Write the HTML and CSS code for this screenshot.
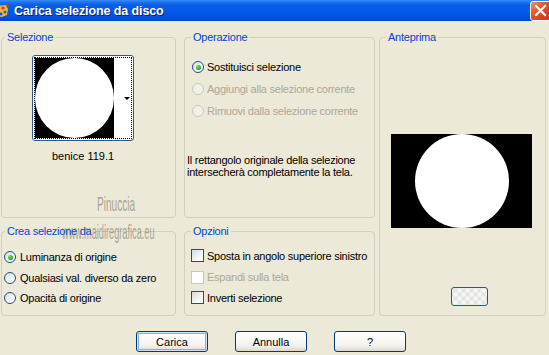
FILE: index.html
```html
<!DOCTYPE html>
<html lang="it">
<head>
    <meta charset="UTF-8">
    <title>Carica selezione da disco</title>
    <link rel="stylesheet" href="styles.css">
</head>
<body>
    <div class="window">
        <div class="titlebar">
            <svg class="app-icon" width="9" height="16" viewBox="0 0 9 16">
                <path d="M-4 3 L6 2 L8 6 L7 12 L2 14 L-4 13 Z" fill="#E8B25A"/>
                <circle cx="3" cy="5" r="1.6" fill="#D43A22"/>
                <circle cx="5" cy="9" r="1.5" fill="#2F7A2F"/>
                <circle cx="1" cy="11" r="1.4" fill="#2846C8"/>
                <path d="M6 1 L8 0 L9 4 L7 5 Z" fill="#8A5A2A"/>
            </svg>
            <span class="title">Carica selezione da disco</span>
            <span class="close">
                <svg width="13" height="13" viewBox="0 0 13 13">
                    <path d="M2 2 L11 11 M11 2 L2 11" stroke="#fff" stroke-width="2.2" stroke-linecap="square"/>
                </svg>
            </span>
        </div>

        <div class="panels">
            <fieldset class="group left sel">
                <legend>Selezione</legend>
                <div class="picker">
                    <div class="thumb">
                        <div class="focus">
                            <div class="shape"><div class="disc"></div></div>
                            <div class="strip"><span class="arrow"></span></div>
                        </div>
                    </div>
                    <div class="thumb-name">benice 119.1</div>
                </div>
            </fieldset>

            <fieldset class="group mid op">
                <legend>Operazione</legend>
                <div class="list">
                    <div class="row"><span class="radio on"></span><span>Sostituisci selezione</span></div>
                    <div class="row disabled"><span class="radio"></span><span>Aggiungi alla selezione corrente</span></div>
                    <div class="row disabled"><span class="radio"></span><span>Rimuovi dalla selezione corrente</span></div>
                </div>
                <p class="note">Il rettangolo originale della selezione<br>intersecherà completamente la tela.</p>
            </fieldset>

            <fieldset class="group right prev">
                <legend>Anteprima</legend>
                <div class="preview"><div class="disc"></div></div>
                <div class="pattern-btn"></div>
            </fieldset>

            <fieldset class="group left crea">
                <legend>Crea selezione da</legend>
                <div class="list">
                    <div class="row short"><span class="radio on"></span><span>Luminanza di origine</span></div>
                    <div class="row short"><span class="radio"></span><span>Qualsiasi val. diverso da zero</span></div>
                    <div class="row short"><span class="radio"></span><span>Opacità di origine</span></div>
                </div>
            </fieldset>

            <fieldset class="group mid opt">
                <legend>Opzioni</legend>
                <div class="list">
                    <div class="row opt-first"><span class="check"></span><span>Sposta in angolo superiore sinistro</span></div>
                    <div class="row short disabled"><span class="check"></span><span>Espandi sulla tela</span></div>
                    <div class="row short"><span class="check"></span><span>Inverti selezione</span></div>
                </div>
            </fieldset>
        </div>

        <div class="buttons">
            <button class="btn default">Carica</button>
            <button class="btn">Annulla</button>
            <button class="btn">?</button>
        </div>

        <div class="watermark">
            <span class="wm-name">Pinuccia</span>
            <span class="wm-site">www.maidiregrafica.eu</span>
        </div>
    </div>
</body>
</html>
```

FILE: styles.css
```css
body {
    margin: 0;
    background: #ECE9D8;
    font-family: "Liberation Sans", Arial, sans-serif;
    font-size: 11px;
    letter-spacing: -0.25px;
    color: #000000;
}
.window {
    position: relative;
    width: 549px;
    height: 355px;
    overflow: hidden;
}
.titlebar {
    display: flex;
    align-items: center;
    height: 21px;
    background: linear-gradient(#3A8CF8 0, #1F74F2 2px, #0A5DE6 5px, #0458E8 12px, #0152E0 17px, #003FCB 21px);
}
.app-icon {
    flex: none;
}
.title {
    margin-left: 5px;
    color: #FFFFFF;
    font-weight: bold;
    font-size: 12.5px;
    letter-spacing: -0.1px;
    text-shadow: 1px 1px 0 #0A1E80;
}
.close {
    margin-left: auto;
    margin-right: -2px;
    width: 21px;
    height: 20px;
    box-sizing: border-box;
    border: 1px solid #FFFFFF;
    border-radius: 3px;
    background: linear-gradient(135deg, #F08A6E, #E0502C 45%, #C8361A);
    display: flex;
    align-items: center;
    justify-content: center;
}

/* group boxes */
.panels {
    display: grid;
    grid-template-columns: 175px 199px 171px;
    grid-template-rows: 187px 91px;
    row-gap: 7px;
    margin: 10px 0 0 1px;
}
.group {
    margin: 0;
    padding: 0;
    min-width: 0;
    border: 1px solid #D0D0BF;
    border-radius: 4px;
}
.group legend {
    padding: 0 2px;
    margin-left: 6px;
    color: #0046D5;
    line-height: 13px;
}
.group.left legend {
    margin-left: 3px;
}
.group.mid {
    margin-left: 8px;
}
.group.right {
    margin-left: 4px;
    grid-row: 1 / 3;
    grid-column: 3;
}

/* selezione */
.picker {
    display: flex;
    flex-direction: column;
    align-items: center;
    width: 102px;
    margin: 11px 0 0 30px;
}
.thumb {
    width: 102px;
    height: 86px;
    box-sizing: border-box;
    border: 1px solid #30598A;
    border-radius: 3px;
    padding: 1px;
    background: #FFFFFF;
}
.focus {
    display: flex;
    height: 100%;
    box-sizing: border-box;
    border: 1px dotted #000000;
}
.shape {
    width: 79px;
    background: #000000;
}
.shape .disc {
    width: 100%;
    height: 100%;
    border-radius: 50%;
    background: #FFFFFF;
}
.strip {
    flex: 1;
    display: flex;
    align-items: center;
    justify-content: flex-end;
    padding-right: 1px;
}
.arrow {
    width: 0;
    height: 0;
    border-left: 3px solid transparent;
    border-right: 3px solid transparent;
    border-top: 3px solid #000000;
}
.thumb-name {
    margin-top: 9px;
    line-height: 13px;
    letter-spacing: 0;
}

/* lists of radios and checks */
.list {
    display: flex;
    flex-direction: column;
}
.op .list {
    margin: 12px 0 0 7px;
}
.crea .list {
    margin: 9px 0 0 2px;
}
.opt .list {
    margin: 6px 0 0 6px;
}
.row {
    display: flex;
    align-items: center;
    gap: 3px;
    height: 22px;
}
.row.short {
    height: 20.5px;
}
.row.opt-first {
    height: 23px;
}
.crea .row {
    gap: 4px;
}
.row.disabled {
    color: #ACA899;
}
.radio {
    flex: none;
    width: 12px;
    height: 12px;
    box-sizing: border-box;
    border: 1px solid #1C5180;
    border-radius: 50%;
    background: linear-gradient(135deg, #DCDCD4, #FFFFFF 80%);
    display: flex;
    align-items: center;
    justify-content: center;
}
.radio.on::after {
    content: "";
    width: 5px;
    height: 5px;
    border-radius: 50%;
    background: radial-gradient(circle at 35% 35%, #7BE07B, #21A121 70%);
}
.disabled .radio {
    border-color: #CAC8BB;
    background: #F2F1E8;
}
.check {
    flex: none;
    width: 13px;
    height: 13px;
    box-sizing: border-box;
    border: 1px solid #1C5180;
    background: linear-gradient(135deg, #DCDCD4, #FFFFFF 85%);
}
.disabled .check {
    border-color: #CAC8BB;
    background: #FFFFFF;
}
.note {
    margin: 33px 0 0 2px;
    line-height: 11.5px;
}

/* anteprima */
.preview {
    width: 141px;
    height: 94px;
    margin: 90px 0 0 11px;
    background: #000000;
    display: flex;
    justify-content: center;
}
.preview .disc {
    width: 94px;
    height: 94px;
    border-radius: 50%;
    background: #FFFFFF;
}
.pattern-btn {
    width: 37px;
    height: 19px;
    box-sizing: border-box;
    margin: 59px 0 0 71px;
    border: 1px solid #2F5785;
    border-radius: 3px;
    background:
        repeating-conic-gradient(#F6F6F3 0 25%, #E4E4E0 0 50%) 50% 50% / 8px 8px;
}

/* bottom buttons */
.buttons {
    display: flex;
    gap: 27px;
    margin: 15px 0 0 136px;
}
.btn {
    width: 72px;
    height: 21px;
    padding: 0;
    border: 1px solid #003C74;
    border-radius: 3px;
    background: linear-gradient(#FFFFFF, #F4F3EE 70%, #DCD8CC);
    font-family: "Liberation Sans", Arial, sans-serif;
    font-size: 11px;
    color: #000000;
}
.btn.default {
    box-shadow: inset 0 0 0 1px #CEE3FC, inset 0 0 0 2px #86AEEE;
}

/* watermark over the dialog */
.watermark {
    position: absolute;
    left: 0;
    top: 0;
    pointer-events: none;
    color: rgba(95, 90, 75, 0.5);
    letter-spacing: 0;
}
.wm-name {
    position: absolute;
    left: 97px;
    top: 192px;
    font-size: 21px;
    white-space: nowrap;
    transform: scaleX(0.48);
    transform-origin: left top;
}
.wm-site {
    position: absolute;
    left: 62px;
    top: 221px;
    font-size: 20px;
    white-space: nowrap;
    transform: scaleX(0.46);
    transform-origin: left top;
}
```
